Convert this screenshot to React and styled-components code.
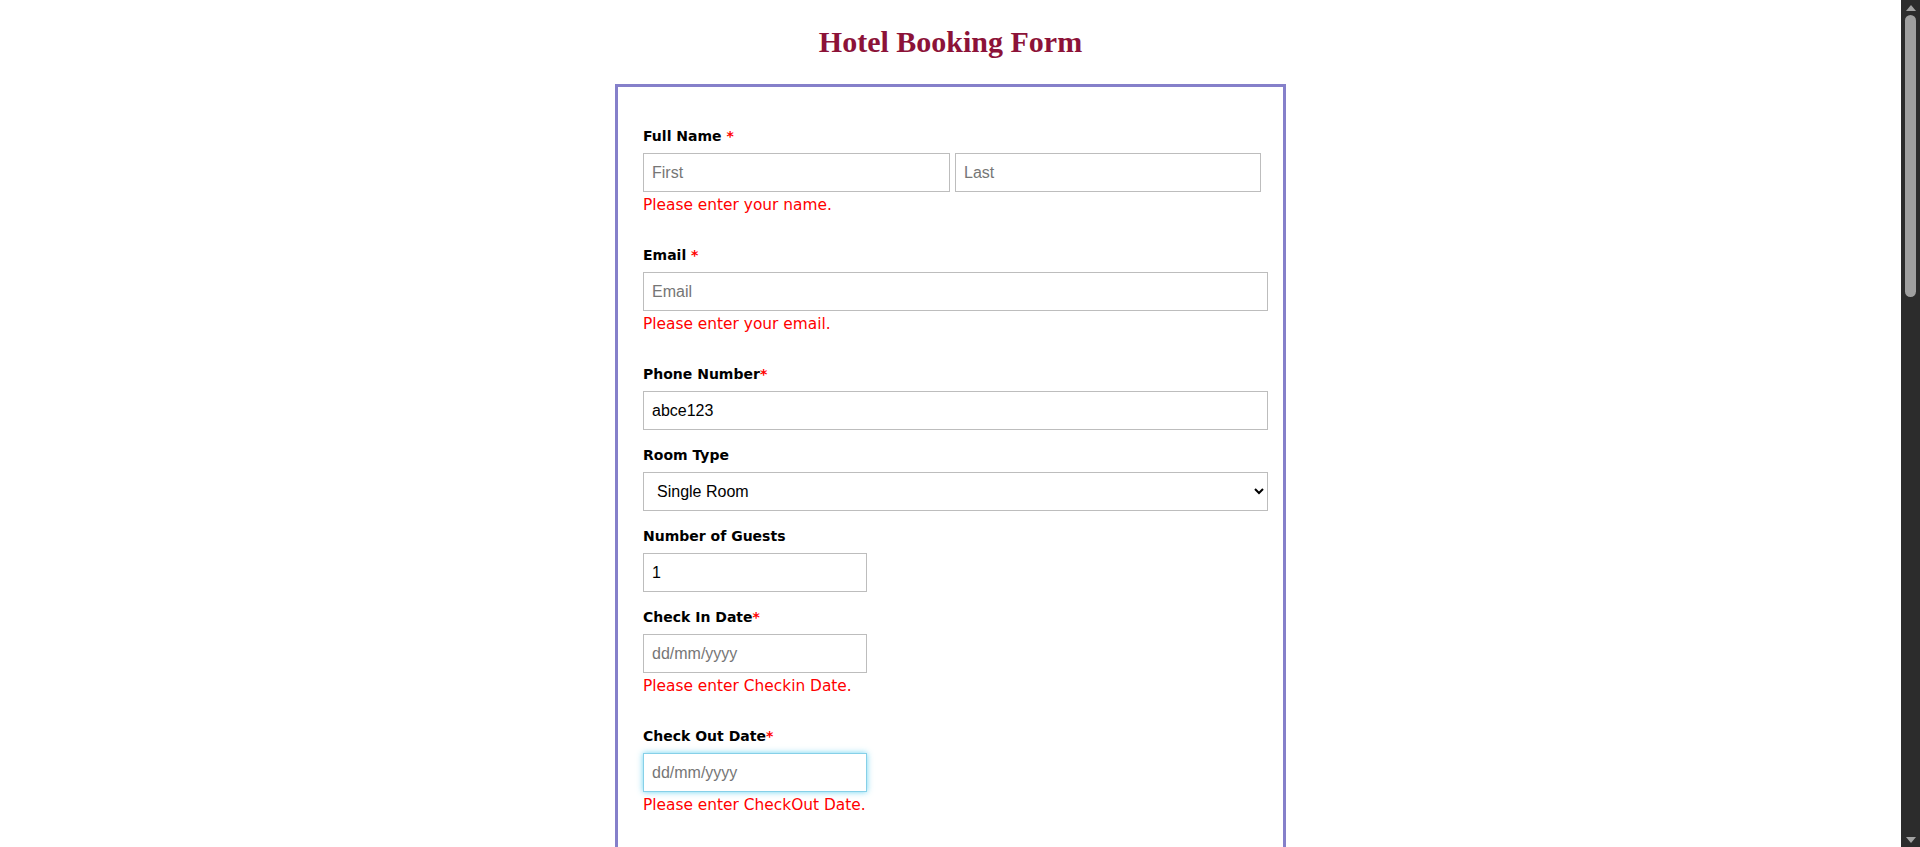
import React from "react";
import styled, { createGlobalStyle } from "styled-components";

const GlobalStyle = createGlobalStyle`
  html, body {
    margin: 0;
    padding: 0;
    background: #ffffff;
  }
`;

const Page = styled.div`
  min-height: 2454px;
  padding: 25px 19px 60px 0;
  box-sizing: border-box;
`;

// the dark browser scrollbar seen on the right of the screenshot
const ScrollRail = styled.div`
  position: fixed;
  top: 0;
  right: 0;
  width: 19px;
  height: 100vh;
  background: #2c2c2c;
  display: flex;
  flex-direction: column;
  align-items: center;
  z-index: 10;
`;

const RailArrow = styled.div`
  height: 15px;
  width: 100%;
  display: flex;
  align-items: center;
  justify-content: center;
  flex: none;
`;

const RailTrack = styled.div`
  flex: 1;
  width: 100%;
  display: flex;
  justify-content: center;
`;

const RailThumb = styled.div`
  width: 11px;
  height: 282px;
  border-radius: 6px;
  background: #9f9f9f;
`;

const Title = styled.h1`
  margin: 0 0 25px;
  font-family: "Liberation Serif", "Times New Roman", serif;
  font-size: 30px;
  line-height: 34px;
  font-weight: bold;
  text-align: center;
  color: #8c1238;
`;

const Form = styled.form`
  box-sizing: border-box;
  width: 671px;
  margin: 0 auto;
  border: 3px solid #8580ca;
  padding: 41px 15px 40px 25px;
  background: #ffffff;
`;

const Field = styled.div`
  display: flex;
  flex-direction: column;
  align-items: flex-start;
  margin-bottom: 17px;
`;

const Label = styled.label`
  display: block;
  margin-bottom: 8px;
  font-family: "DejaVu Sans", Verdana, sans-serif;
  font-size: 14px;
  line-height: 17px;
  font-weight: bold;
  color: #000000;
`;

const Req = styled.span`
  color: #ff0000;
`;

const Error = styled.div`
  margin: 4px 0 16px;
  font-family: "DejaVu Sans", Verdana, sans-serif;
  font-size: 15.4px;
  line-height: 18px;
  color: #ff0000;
`;

const NameRow = styled.div`
  display: grid;
  grid-template-columns: 307px 306px;
  gap: 5px;
`;

const Input = styled.input`
  box-sizing: border-box;
  display: block;
  width: ${(p) => p.$w || "100%"};
  height: 39px;
  margin: 0;
  padding: 0 8px;
  border: 1px solid ${(p) => (p.$focused ? "#86d0e8" : "#bdbdbd")};
  border-radius: 0;
  box-shadow: ${(p) => (p.$focused ? "0 0 6px rgba(81, 203, 238, 0.85)" : "none")};
  outline: none;
  background: #ffffff;
  font-family: "Liberation Sans", Arial, sans-serif;
  font-size: 16px;
  color: #000000;

  &::placeholder {
    color: #767676;
  }
`;

const Select = styled.select`
  box-sizing: border-box;
  display: block;
  width: 100%;
  height: 39px;
  margin: 0;
  padding: 0 0 0 9px;
  border: 1px solid #bdbdbd;
  border-radius: 0;
  outline: none;
  background: #ffffff;
  font-family: "Liberation Sans", Arial, sans-serif;
  font-size: 16px;
  color: #000000;
`;

const TextArea = styled.textarea`
  box-sizing: border-box;
  display: block;
  width: 100%;
  height: 120px;
  padding: 8px;
  border: 1px solid #bdbdbd;
  font-family: "Liberation Sans", Arial, sans-serif;
  font-size: 16px;
  resize: vertical;
`;

const Submit = styled.button`
  padding: 10px 28px;
  border: none;
  background: #8580ca;
  color: #ffffff;
  font-family: "DejaVu Sans", Verdana, sans-serif;
  font-size: 15px;
  font-weight: bold;
  cursor: pointer;
`;

const App = () => {
  return (
    <>
      <GlobalStyle />
      <ScrollRail>
        <RailArrow>
          <svg width="10" height="6" viewBox="0 0 10 6">
            <path d="M0 6 L5 0 L10 6 Z" fill="#a3a3a3" />
          </svg>
        </RailArrow>
        <RailTrack>
          <RailThumb />
        </RailTrack>
        <RailArrow>
          <svg width="10" height="6" viewBox="0 0 10 6">
            <path d="M0 0 L10 0 L5 6 Z" fill="#a3a3a3" />
          </svg>
        </RailArrow>
      </ScrollRail>
      <Page>
        <Title>Hotel Booking Form</Title>
        <Form noValidate onSubmit={(e) => e.preventDefault()}>
          <Field>
            <Label>
              Full Name <Req>*</Req>
            </Label>
            <NameRow>
              <Input type="text" placeholder="First" />
              <Input type="text" placeholder="Last" />
            </NameRow>
            <Error>Please enter your name.</Error>
          </Field>

          <Field>
            <Label>
              Email <Req>*</Req>
            </Label>
            <Input type="email" placeholder="Email" />
            <Error>Please enter your email.</Error>
          </Field>

          <Field>
            <Label>
              Phone Number<Req>*</Req>
            </Label>
            <Input type="text" defaultValue="abce123" />
          </Field>

          <Field>
            <Label>Room Type</Label>
            <Select defaultValue="single">
              <option value="single">Single Room</option>
              <option value="double">Double Room</option>
              <option value="suite">Suite</option>
            </Select>
          </Field>

          <Field>
            <Label>Number of Guests</Label>
            <Input type="text" $w="224px" defaultValue="1" />
          </Field>

          <Field>
            <Label>
              Check In Date<Req>*</Req>
            </Label>
            <Input type="text" $w="224px" placeholder="dd/mm/yyyy" />
            <Error>Please enter Checkin Date.</Error>
          </Field>

          <Field>
            <Label>
              Check Out Date<Req>*</Req>
            </Label>
            <Input type="text" $w="224px" placeholder="dd/mm/yyyy" $focused />
            <Error>Please enter CheckOut Date.</Error>
          </Field>

          <Field>
            <Label>Number of Nights</Label>
            <Input type="text" $w="224px" />
          </Field>

          <Field>
            <Label>Special Requests</Label>
            <TextArea />
          </Field>

          <Submit type="submit">Book Now</Submit>
        </Form>
      </Page>
    </>
  );
};

export default App;
